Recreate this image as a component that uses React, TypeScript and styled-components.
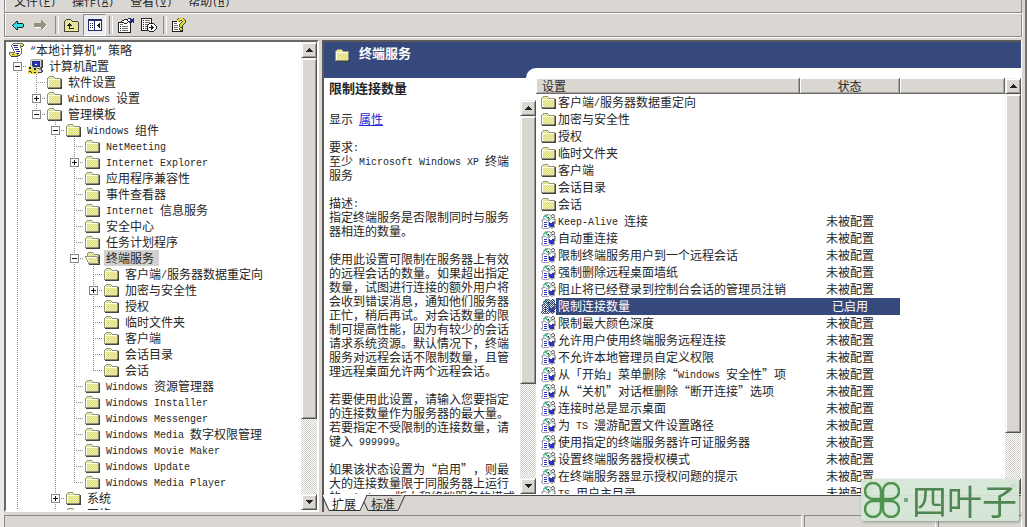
import React from 'react';
import styled, { createGlobalStyle, css } from 'styled-components';

const face = '#dad7d3';
const shade = '#8a8886';
const dark = '#4a4a4a';
const ink = '#262626';
const navy = '#36497c';
const cjk = "'Noto Sans CJK SC', 'Liberation Sans', sans-serif";

const GlobalStyle = createGlobalStyle`
  * { box-sizing: border-box; }
  body {
    margin: 0;
    background: ${face};
    color: ${ink};
    font: 12px/16px ${cjk};
    text-spacing-trim: space-all;
    overflow: hidden;
  }
  button { font: inherit; color: inherit; }
`;

/* ---------- text ---------- */

const Latin = styled.span`
  font-family: 'Liberation Mono', monospace;
  font-size: 10px;
  line-height: 10px;
  vertical-align: 1px;
  white-space: pre-wrap;
`;

function Mixed({ children }: { children: string }) {
  return (
    <>
      {children.split(/([\x20-\x7e]+)/).map((part, i) =>
        i % 2 ? <Latin key={i}>{part}</Latin> : part
      )}
    </>
  );
}

/* ---------- pixel icons ---------- */

const palette: Record<string, string> = {
  g: '#92927c', y: '#dfdf78', x: '#efeeb0', w: '#fffff0', k: '#44443a',
  s: '#b0b0b0', d: '#707070', b: '#2a33c4', n: '#252a70', c: '#35dcea',
  e: '#3fc48a', l: '#d6d6d6', W: '#ffffff', K: '#202020', Y: '#e8dc30', p: '#a99ebc',
};

const folderArt = [
  '..ggggg........',
  '.gxxxxxg.......',
  'gxyyyyyygggggg.',
  'gwwwwwwwwwwwwgk',
  'gwyxyxyxyxyxygk',
  'gwxyxyxyxyxyxgk',
  'gwyxyxyxyxyxygk',
  'gwxyxyxyxyxyxgk',
  'gwyxyxyxyxyxygk',
  'gwxyxyxyxyxyxgk',
  'gwyxyxyxyxyxygk',
  'gggggggggggggkk',
  '.kkkkkkkkkkkkkk',
];
const openFolderArt = [
  '...ggggg.......',
  '..gxyxyxg......',
  '..gyxyxyxggggg.',
  '..gxyxyxyxyxygk',
  'ggggggggggggygk',
  'gwwwwwwwwwwwgdk',
  '.gwyxyxyxyxygdk',
  '.gwxyxyxyxyxygk',
  '..gwyxyxyxyxgkk',
  '..gwxyxyxyxyxgk',
  '...gyxyxyxyxykk',
  '...gggggggggggk',
  '....kkkkkkkkkkk',
];
const settingArt = [
  '....sssss..dd..',
  '...seeeWlsdlld.',
  '..seeeWWWlsWWd.',
  '..slWeeKWlsdds.',
  '..slWWeeelslls.',
  '.pppsWWeesWllds',
  'ppWWWpsssWWWWls',
  '.pWWWWWpWWWllds',
  '.pWbbbWpbWWbbds',
  '.pWWWWWpbbbbbds',
  '.pWbbbWpbbbbbs.',
  '.pWWWWWpbbbbbs.',
  'ppWbbbWWpbbbbs.',
  'pWWWWWWWpsssss.',
  '.ppppppp..ss...',
];
const scrollArt = [
  '....dddddddddd.',
  '...dwwwwwwwwYYd',
  '..dwnnnnnwwdYYk',
  '..dwwwwwwwwdkk.',
  '...dwbbbbwwd...',
  '...dwwwwwwwwd..',
  '....dwnnnnwwd..',
  '....dwwwwwwwd..',
  '.....dwbbbbwd..',
  'ddddddwwwwwwd..',
  'dwYYYYYdbbwwd..',
  'dYwddYYYdwwd...',
  '.dYYYYYYdkk....',
  '..kkkkkkk......',
];
const computerArt = [
  '...sssssssssss.',
  '..slllllllllldk',
  '..slnnnnnnnnldk',
  '..slnbbbbbbnldk',
  '..slnbbbbbbnldk',
  '..slnbbWWbbnldk',
  '..slnbbbbbbnldk',
  '.YY.snnnnnnnldk',
  'YKKYssYYsllldkk',
  'YKKYlYKKYddddk.',
  '.YYllYKKYllsdk.',
  'YYYYYlYYllllldk',
  'YKKYYYYYYYllldk',
  'YYYKYYKKYYkkkk.',
  'YY.YYYYY.YY....',
];
const upArt = [
  '..kkkkk........',
  '.kxyxyxk.......',
  'kyxyxyxykkkkkk.',
  'kxyxyxyxyxyxyxk',
  'kyxyxKxyxyxyxyk',
  'kxyxKKKyxyxyxyk',
  'kyxKKKKKxyxyxyk',
  'kxyxyKyxyxyxyxk',
  'kyxyxKxyxyxyxyk',
  'kxyxyKKKKKyxyxk',
  'kyxyxyxyxyxyxyk',
  'kxyxyxyxyxyxyxk',
  'kkkkkkkkkkkkkkk',
];
const treeViewArt = [
  'nnnnnnnnnnnnnn',
  'nnnnnnnnnnnnnn',
  'nWWWWWnWWWWWWn',
  'nWWWWWnWWWWWWn',
  'nWKWKWnWWWWKWn',
  'nWWWWWnWWWKKWn',
  'nWKWKWnWWKKKWn',
  'nWWWWWnWWWKKWn',
  'nWKWKWnWWWWKWn',
  'nWWWWWnWWWWWWn',
  'nWWWWWnWWWWWWn',
  'nnnnnnnnnnnnnn',
];
const propertiesArt = [
  '..........nnn..n',
  '......KKKnWWnnnn',
  '....KKWWWKWWbnnn',
  '...KWWWWWWKbbnnn',
  'KKKKKKWWWKWnnn.n',
  'KWWWWWKKKWWWK...',
  'KWdddWWWWWWWK...',
  'KWWWWWWWWWWWK...',
  'KWKWddddddWWK...',
  'KWWWWWWWWWWWK...',
  'KWKWddddddWWK...',
  'KWWWWWWWWWWWK...',
  'KWKWddddddWWK...',
  'KWWWWWWWWWWWK...',
  'KKKKKKKKKKKKK...',
];
const exportArt = [
  'KKKKKKKKKKK.....',
  'KWWWWWWWWWK.....',
  'KWKWdddddWK.....',
  'KWWWWWWWWWK.....',
  'KWKWdddddWK.....',
  'KWWWWWWWKKKKK...',
  'KWKWdddKWWWWWK..',
  'KWWWWWKWWWKWWWK.',
  'KWKWddKWWWKKWWWK',
  'KWWWWWKWKKKKKWWK',
  'KWKWddKWWWKKWWWK',
  'KWWWWWKWWWKWWWK.',
  'KKKKKKKKWWWWWK..',
  '........KKKKK...',
];
const helpArt = [
  '......kYYYYk...',
  '.....kYYYYYYk..',
  '.....YYYkkYYYk.',
  'KKKKKYYk..kYYk.',
  'KWWWWWWWWkYYYk.',
  'KWdddWWWkYYYk..',
  'KWWWWWWkYYYk...',
  'KWddddWkYYk....',
  'KWWWWWWkYYk....',
  'KWddddWWkkK....',
  'KWWWWWWkYYk....',
  'KWddddWkYYk....',
  'KWWWWWWWkkK....',
  'KKKKKKKKKKK....',
];
const backArt = [
  '....KK......',
  '...KcK......',
  '..KccKKKKKK.',
  '.KcccccccccK',
  'KccccccccccK',
  '.KcccccccccK',
  '..KccKKKKKK.',
  '...KcK......',
  '....KK......',
];
const forwardArt = [
  '.......g.....',
  '.......gg....',
  '.......ggg...',
  'ggggggggggg..',
  'gggggggggggg.',
  'ggggggggggggW',
  'gggggggggggW.',
  '.WWWWWWgggW..',
  '.......ggW...',
  '.......gW....',
];

const Svg = styled.svg`
  display: block;
  flex: none;
`;

function PixelIcon({ art, dithered }: { art: string[]; dithered?: boolean }) {
  const width = Math.max(...art.map((r) => r.length));
  return (
    <Svg width={width} height={art.length} shapeRendering="crispEdges" aria-hidden="true">
      {art.flatMap((row, y) =>
        row.split('').map((ch, x) => {
          if (ch === '.') return null;
          const fill = dithered && (x + y) % 2 ? navy : palette[ch];
          return <rect key={`${x}-${y}`} x={x} y={y} width={1} height={1} fill={fill} />;
        })
      )}
    </Svg>
  );
}

/* ---------- frame and bars ---------- */

const Frame = styled.div`
  height: 100vh;
  display: flex;
  flex-direction: column;
  border-left: 4px solid #ebe9e7;
  border-right: 2px solid #777573;
  padding-right: 3px;
  background: ${face};
`;

const bar = css`
  flex: none;
  display: flex;
  border: 1px solid ${shade};
  border-top: 0;
  box-shadow: 0 1px 0 #fff, 1px 0 0 #fff, inset 1px 0 0 #fff;
`;

const MenuBar = styled.nav`
  ${bar}
  height: 13px;
  padding: 0 0 3px 9px;
  gap: 16px;
  align-items: flex-end;
  overflow: hidden;
  box-shadow: inset 1px 0 0 #fff;
`;

const MenuItem = styled.button`
  border: 0;
  padding: 0;
  background: none;
  flex: none;
  line-height: 16px;
  white-space: nowrap;
`;

const Toolbar = styled.div`
  ${bar}
  height: 24px;
  border-top: 1px solid #fff;
  padding-left: 1px;
  align-items: stretch;
`;

const ToolButton = styled.button<{ $pressed?: boolean }>`
  width: 23px;
  padding: 0;
  border: 1px solid transparent;
  background: none;
  display: flex;
  align-items: center;
  justify-content: center;
  ${(p) =>
    p.$pressed &&
    css`
      border-color: ${shade} #fff #fff ${shade};
      background: #ececf0;
    `}
`;

const ToolDivider = styled.span`
  width: 8px;
  padding: 2px 3px;
  &::before {
    content: '';
    display: block;
    width: 2px;
    height: 100%;
    border-left: 1px solid ${shade};
    border-right: 1px solid #fff;
  }
`;

const Panes = styled.main`
  flex: 1;
  min-height: 0;
  display: flex;
  gap: 3px;
  padding: 3px 0;
`;

const StatusBar = styled.footer`
  flex: none;
  height: 12px;
  display: flex;
  gap: 2px;
`;

const StatusCell = styled.div<{ $width?: number }>`
  flex: ${(p) => (p.$width ? `0 0 ${p.$width}px` : '1')};
  border: 1px solid ${shade};
  border-right-color: #fff;
  border-bottom: 0;
`;

/* ---------- scroll bar ---------- */

const raised = css`
  border: 1px solid;
  border-color: #f2f1ef #55534f #55534f #f2f1ef;
  box-shadow: inset 1px 1px 0 #fff, inset -1px -1px 0 #9a9894;
  background: ${face};
`;

const Scroll = styled.div`
  flex: none;
  width: 16px;
  display: flex;
  flex-direction: column;
  background: repeating-conic-gradient(#d2cfcb 0 25%, #fff 0 50%) 0 0 / 2px 2px;
`;

const ScrollButton = styled.button`
  ${raised}
  flex: none;
  height: 16px;
  padding: 0;
  display: flex;
  align-items: center;
  justify-content: center;
`;

const ScrollThumb = styled.div<{ $share: number }>`
  ${raised}
  flex: ${(p) => p.$share} 1 0;
`;

const ScrollRest = styled.div<{ $share: number }>`
  flex: ${(p) => p.$share} 1 0;
`;

function ScrollBar({ thumb, rest }: { thumb: number; rest: number }) {
  return (
    <Scroll>
      <ScrollButton aria-label="向上滚动">
        <Svg width="7" height="4" shapeRendering="crispEdges"><path d="M3 0h1v1h1v1h1v1h1v1H0V3h1V2h1V1h1z" fill="#222" /></Svg>
      </ScrollButton>
      <ScrollThumb $share={thumb} />
      <ScrollRest $share={rest} />
      <ScrollButton aria-label="向下滚动">
        <Svg width="7" height="4" shapeRendering="crispEdges"><path d="M0 0h7v1H6v1H5v1H4v1H3V3H2V2H1V1H0z" fill="#222" /></Svg>
      </ScrollButton>
    </Scroll>
  );
}

/* ---------- tree ---------- */

type Node = { name: string; open?: boolean; more?: boolean; selected?: boolean; art?: string[]; children?: Node[] };

const leaf = (name: string): Node => ({ name });

const tree: Node[] = [
  {
    name: '计算机配置', open: true, art: computerArt, children: [
      leaf('软件设置'),
      { name: 'Windows 设置', more: true },
      {
        name: '管理模板', open: true, children: [
          {
            name: 'Windows 组件', open: true, children: [
              leaf('NetMeeting'),
              { name: 'Internet Explorer', more: true },
              leaf('应用程序兼容性'),
              leaf('事件查看器'),
              leaf('Internet 信息服务'),
              leaf('安全中心'),
              leaf('任务计划程序'),
              {
                name: '终端服务', open: true, selected: true, art: openFolderArt, children: [
                  leaf('客户端/服务器数据重定向'),
                  { name: '加密与安全性', more: true },
                  leaf('授权'),
                  leaf('临时文件夹'),
                  leaf('客户端'),
                  leaf('会话目录'),
                  leaf('会话'),
                ],
              },
              leaf('Windows 资源管理器'),
              leaf('Windows Installer'),
              leaf('Windows Messenger'),
              leaf('Windows Media 数字权限管理'),
              leaf('Windows Movie Maker'),
              leaf('Windows Update'),
              leaf('Windows Media Player'),
            ],
          },
          { name: '系统', more: true },
          { name: '网络', more: true },
        ],
      },
    ],
  },
];

const TreePane = styled.section`
  flex: none;
  width: 315px;
  display: flex;
  border: 2px solid #fff;
  border-top-color: #6a6866;
  border-left-color: #6a6866;
  background: #fff;
`;

const TreeView = styled.div`
  flex: 1;
  min-width: 0;
  overflow: hidden;
  padding-left: 2px;
`;

const TreeRow = styled.div`
  height: 16px;
  display: flex;
  align-items: center;
  white-space: nowrap;
`;

const dots = (dir: string) => `repeating-linear-gradient(${dir}, #8c8c8c 0 1px, transparent 1px 2px)`;

const Guide = styled.span<{ $line: 'none' | 'full' | 'half'; $branch?: boolean }>`
  flex: none;
  width: 19px;
  height: 16px;
  display: flex;
  align-items: center;
  padding-left: 5px;
  background-repeat: no-repeat;
  background-image: ${dots('to bottom')}, ${dots('to right')};
  background-position: 9px 0, 9px 8px;
  background-size: ${(p) => (p.$line === 'none' ? '0 0' : p.$line === 'full' ? '1px 16px' : '1px 9px')},
    ${(p) => (p.$branch ? '10px 1px' : '0 0')};
`;

const Toggle = styled.button`
  width: 9px;
  height: 9px;
  padding: 0;
  border: 1px solid ${shade};
  background: #fff;
  display: flex;
  align-items: center;
  justify-content: center;
`;

const IconSlot = styled.span`
  width: 20px;
  padding-left: 1px;
  flex: none;
`;

const TreeLabel = styled.span<{ $selected?: boolean }>`
  height: 16px;
  padding: 0 5px 0 2px;
  line-height: 15px;
  background: ${(p) => (p.$selected ? '#d3d1cf' : 'transparent')};
`;

function Branch({ nodes, guides }: { nodes: Node[]; guides: boolean[] }) {
  return (
    <>
      {nodes.map((node, i) => {
        const last = guides.length > 0 && i === nodes.length - 1;
        return (
          <React.Fragment key={node.name}>
            <TreeRow>
              {guides.map((on, g) => <Guide key={g} $line={on ? 'full' : 'none'} />)}
              <Guide $line={last ? 'half' : 'full'} $branch>
                {(node.open || node.more) && (
                  <Toggle aria-label={node.open ? '折叠' : '展开'}>
                    <Svg width="5" height="5" shapeRendering="crispEdges">
                      <path d={node.open ? 'M0 2h5v1H0z' : 'M0 2h5v1H0zM2 0h1v5H2z'} fill="#111" />
                    </Svg>
                  </Toggle>
                )}
              </Guide>
              <IconSlot><PixelIcon art={node.art ?? folderArt} /></IconSlot>
              <TreeLabel $selected={node.selected}><Mixed>{node.name}</Mixed></TreeLabel>
            </TreeRow>
            {node.children && <Branch nodes={node.children} guides={[...guides, !last]} />}
          </React.Fragment>
        );
      })}
    </>
  );
}

/* ---------- detail pane ---------- */

const DetailPane = styled.section`
  flex: 1;
  min-width: 0;
  display: flex;
  flex-direction: column;
  border: 0 solid #5c5a58;
  border-width: 2px 0 0 2px;
  box-shadow: 1px 0 0 #fff;
  margin-right: 1px;
`;

const TitleStrip = styled.header`
  flex: none;
  height: 26px;
  display: flex;
  align-items: center;
  gap: 9px;
  padding-left: 11px;
  background: ${navy};
  color: #fff;
`;

const Title = styled.h1`
  margin: 0;
  font-size: 13px;
  line-height: 16px;
  padding-bottom: 5px;
`;

const TabCurve = styled.div`
  flex: none;
  height: 10px;
  background: ${navy};
  padding-left: 202px;
  &::before {
    content: '';
    display: block;
    height: 10px;
    background: #fff;
    border-top-left-radius: 10px;
  }
`;

const DetailBody = styled.div`
  flex: 1;
  min-height: 0;
  display: flex;
  background: #fff;
  border-bottom: 1px solid ${dark};
  padding-bottom: 1px;
`;

const Description = styled.article`
  flex: none;
  width: 212px;
  display: flex;
  flex-direction: column;
`;

const SettingTitle = styled.h2`
  margin: 0;
  padding: 2px 5px 4px;
  font-size: 13px;
  line-height: 16px;
`;

const DescriptionScroll = styled.div`
  flex: 1;
  min-height: 0;
  display: flex;
`;

const DescriptionText = styled.div`
  flex: 1;
  min-width: 0;
  overflow: hidden;
  padding: 12px 2px 0 5px;
  line-height: 14px;
  p { margin: 0 0 14px; }
`;

const Link = styled.a`
  color: #2a2ad0;
  text-decoration: underline;
`;

const ListArea = styled.div`
  flex: 1;
  min-width: 0;
  display: flex;
`;

const TableWrap = styled.div`
  flex: 1;
  min-width: 0;
  overflow: hidden;
`;

const Table = styled.table`
  width: 100%;
  table-layout: fixed;
  border-collapse: separate;
  border-spacing: 0;
`;

const HeadCell = styled.th<{ $width?: number; $center?: boolean }>`
  width: ${(p) => (p.$width ? `${p.$width}px` : 'auto')};
  height: 16px;
  padding: 0 6px;
  font-weight: normal;
  line-height: 14px;
  text-align: ${(p) => (p.$center ? 'center' : 'left')};
  background: ${face};
  border-right: 1px solid #6a6866;
  border-bottom: 1px solid #6a6866;
  box-shadow: inset 1px 1px 0 #fff, inset -1px -1px 0 #a8a6a2;
`;

const NameCell = styled.td`
  height: 17px;
  padding: 0 0 0 5px;
`;

const NameLine = styled.div`
  display: flex;
  align-items: center;
  height: 17px;
`;

const marked = css`
  background: ${navy};
  color: #fff;
`;

const Name = styled.span<{ $selected?: boolean }>`
  flex: 1;
  height: 17px;
  padding-left: 2px;
  line-height: 15px;
  white-space: nowrap;
  ${(p) => p.$selected && marked}
`;

const StateCell = styled.td<{ $selected?: boolean }>`
  height: 17px;
  padding: 0 0 2px;
  line-height: 15px;
  text-align: center;
  ${(p) => p.$selected && marked}
`;

const Tabs = styled.div`
  flex: none;
  height: 17px;
  margin: -1px 0 0 -2px;
  display: flex;
  position: relative;
`;

const TabShapes = styled(Svg)`
  position: absolute;
  left: 0;
  top: 0;
`;

const Tab = styled.button`
  position: relative;
  border: 0;
  background: none;
  padding: 0 5px 0 10px;
  line-height: 15px;
  height: 16px;
`;

const folders = ['客户端/服务器数据重定向', '加密与安全性', '授权', '临时文件夹', '客户端', '会话目录', '会话'];
const settings = [
  'Keep-Alive 连接', '自动重连接', '限制终端服务用户到一个远程会话', '强制删除远程桌面墙纸',
  '阻止将已经登录到控制台会话的管理员注销', '限制连接数量', '限制最大颜色深度',
  '允许用户使用终端服务远程连接', '不允许本地管理员自定义权限', '从「开始」菜单删除“Windows 安全性”项',
  '从“关机”对话框删除“断开连接”选项', '连接时总是显示桌面', '为 TS 漫游配置文件设置路径',
  '使用指定的终端服务器许可证服务器', '设置终端服务器授权模式', '在终端服务器显示授权问题的提示', 'TS 用户主目录',
];
const enabled = '限制连接数量';

/* ---------- watermark ---------- */

const Watermark = styled.div`
  position: fixed;
  right: 8px;
  bottom: 6px;
  height: 42px;
  padding: 0 2px 0 3px;
  display: flex;
  align-items: center;
  border-radius: 3px;
  background: rgba(214, 231, 214, 0.95);
  box-shadow: 1px 1px 3px rgba(60, 80, 60, 0.5);
  color: #4f8552;
  font-size: 35px;
  line-height: 42px;
`;

const WatermarkDot = styled.span`
  width: 4px;
  height: 4px;
  margin: 0 4px;
  background: #7fa881;
`;

const petal = 'M17 17V9C17 4 13 1 9 1S1 4 1 9s4 8 8 8z';

export default function App() {
  return (
    <Frame lang="zh-CN">
      <GlobalStyle />
      <MenuBar>
        {[['文件', 'F'], ['操作', 'A'], ['查看', 'V'], ['帮助', 'H']].map(([label, key]) => (
          <MenuItem key={key}>{label}<Latin>(<u>{key}</u>)</Latin></MenuItem>
        ))}
      </MenuBar>
      <Toolbar>
        <ToolButton aria-label="后退"><PixelIcon art={backArt} /></ToolButton>
        <ToolButton aria-label="前进"><PixelIcon art={forwardArt} /></ToolButton>
        <ToolDivider />
        <ToolButton aria-label="向上"><PixelIcon art={upArt} /></ToolButton>
        <ToolButton aria-label="显示树" $pressed><PixelIcon art={treeViewArt} /></ToolButton>
        <ToolDivider />
        <ToolButton aria-label="属性"><PixelIcon art={propertiesArt} /></ToolButton>
        <ToolButton aria-label="导出列表"><PixelIcon art={exportArt} /></ToolButton>
        <ToolDivider />
        <ToolButton aria-label="帮助"><PixelIcon art={helpArt} /></ToolButton>
      </Toolbar>
      <Panes>
        <TreePane>
          <TreeView>
            <TreeRow>
              <IconSlot><PixelIcon art={scrollArt} /></IconSlot>
              <TreeLabel><Latin>“</Latin>本地计算机<Latin>“ </Latin>策略</TreeLabel>
            </TreeRow>
            <Branch nodes={tree} guides={[]} />
          </TreeView>
          <ScrollBar thumb={361} rest={76} />
        </TreePane>
        <DetailPane>
          <TitleStrip>
            <PixelIcon art={folderArt} />
            <Title>终端服务</Title>
          </TitleStrip>
          <TabCurve />
          <DetailBody>
            <Description>
              <SettingTitle>{enabled}</SettingTitle>
              <DescriptionScroll>
                <DescriptionText>
                  <p>显示<Latin> </Latin><Link href="#properties">属性</Link></p>
                  <p><Mixed>要求:</Mixed><br /><Mixed>至少 Microsoft Windows XP 终端服务</Mixed></p>
                  <p><Mixed>描述:</Mixed><br />指定终端服务是否限制同时与服务器相连的数量。</p>
                  <p>使用此设置可限制在服务器上有效的远程会话的数量。如果超出指定数量，试图进行连接的额外用户将会收到错误消息，通知他们服务器正忙，稍后再试。对会话数量的限制可提高性能，因为有较少的会话请求系统资源。默认情况下，终端服务对远程会话不限制数量，且管理远程桌面允许两个远程会话。</p>
                  <p><Mixed>若要使用此设置，请输入您要指定的连接数量作为服务器的最大量。若要指定不受限制的连接数量，请键入 999999。</Mixed></p>
                  <p><Mixed>如果该状态设置为“启用”，则最大的连接数量限于同服务器上运行的 Windows 版本和终端服务的模式</Mixed></p>
                </DescriptionText>
                <ScrollBar thumb={268} rest={95} />
              </DescriptionScroll>
            </Description>
            <ListArea>
              <TableWrap>
                <Table>
                  <thead>
                    <tr>
                      <HeadCell $width={264}>设置</HeadCell>
                      <HeadCell $width={100} $center>状态</HeadCell>
                      <HeadCell aria-label="其他" />
                    </tr>
                  </thead>
                  <tbody>
                    {folders.map((name) => (
                      <tr key={name}>
                        <NameCell>
                          <NameLine><PixelIcon art={folderArt} /><Name><Mixed>{name}</Mixed></Name></NameLine>
                        </NameCell>
                      </tr>
                    ))}
                    {settings.map((name) => {
                      const on = name === enabled;
                      return (
                        <tr key={name}>
                          <NameCell>
                            <NameLine>
                              <PixelIcon art={settingArt} dithered={on} />
                              <Name $selected={on}><Mixed>{name}</Mixed></Name>
                            </NameLine>
                          </NameCell>
                          <StateCell $selected={on}>{on ? '已启用' : '未被配置'}</StateCell>
                        </tr>
                      );
                    })}
                  </tbody>
                </Table>
              </TableWrap>
              <ScrollBar thumb={340} rest={45} />
            </ListArea>
          </DetailBody>
          <Tabs>
            <TabShapes width="90" height="17" aria-hidden="true">
              <path d="M42 7l4 8.500h30L83 0" fill={face} stroke="#333" />
              <path d="M0 0l7 15.500h31L45 0z" fill="#fff" />
              <path d="M0 0l7 15.500h31L45 0" fill="none" stroke="#333" />
            </TabShapes>
            <Tab>扩展</Tab>
            <Tab>标准</Tab>
          </Tabs>
        </DetailPane>
      </Panes>
      <StatusBar>
        <StatusCell />
        <StatusCell $width={132} />
        <StatusCell $width={84} />
      </StatusBar>
      <Watermark>
        <Svg width="36" height="36" fill="none" stroke="#4c9450" strokeWidth="2.500" aria-hidden="true">
          <path d={petal} />
          <path d={petal} transform="matrix(-1 0 0 1 36 0)" />
          <path d={petal} transform="matrix(1 0 0 -1 0 36)" />
          <path d={petal} transform="rotate(180 18 18)" />
        </Svg>
        <WatermarkDot />
        <span>四叶子</span>
      </Watermark>
    </Frame>
  );
}
